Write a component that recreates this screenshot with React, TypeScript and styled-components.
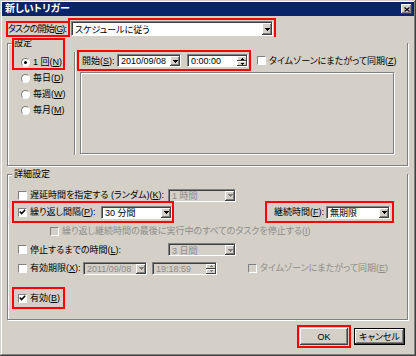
import React from 'react'
import styled, { createGlobalStyle } from 'styled-components'

const FACE = '#d4d0c8'
const SHADOW = '#808080'
const DARK = '#404040'
const MARK = '#ff0000'
const GRAYTEXT = '#8e8c88'

const GlobalStyle = createGlobalStyle`
  html, body {
    margin: 0;
    padding: 0;
    background: ${FACE};
  }
  body {
    font-family: "Liberation Sans", "Noto Sans CJK JP", sans-serif;
    font-size: 9px;
    font-feature-settings: "palt";
    color: #000;
  }
  * {
    box-sizing: border-box;
  }
`

const Window = styled.div`
  width: 416px;
  height: 356px;
  padding: 2px;
  background: ${FACE};
  box-shadow: inset -1px -1px ${DARK}, inset 1px 1px ${FACE}, inset -2px -2px ${SHADOW}, inset 2px 2px #fff;
  display: flex;
  flex-direction: column;
`

const TitleBar = styled.div`
  height: 14px;
  background: #0a246a;
  display: flex;
  align-items: center;
  justify-content: space-between;
  padding: 0 2px 0 3px;
`

const TitleText = styled.span`
  color: #fff;
  font-weight: bold;
  font-size: 10px;
  line-height: 12px;
`

const CloseButton = styled.span`
  width: 11px;
  height: 10px;
  background: ${FACE};
  box-shadow: inset -1px -1px ${DARK}, inset 1px 1px #fff, inset -2px -2px ${SHADOW};
  display: flex;
  align-items: center;
  justify-content: center;
`

const Body = styled.div`
  padding-left: 4px;
  display: flex;
  flex-direction: column;
`

const Key = styled.span`
  text-decoration: underline;
`

const TopRow = styled.div`
  display: flex;
  align-items: center;
  height: 15px;
  margin-top: 5px;
  padding-left: 2px;
`

const TopLabel = styled.span`
  width: 60px;
  height: 12px;
  line-height: 12px;
  letter-spacing: -0.8px;
  white-space: nowrap;
  outline: 2px solid ${MARK};
  margin-right: 3px;
`

const Field = styled.div<{ $w: number; $h?: number; $disabled?: boolean; $mark?: boolean }>`
  flex: none;
  display: flex;
  align-items: stretch;
  width: ${p => p.$w}px;
  height: ${p => p.$h ?? 13}px;
  background: ${p => (p.$disabled ? FACE : '#fff')};
  color: ${p => (p.$disabled ? GRAYTEXT : '#000')};
  border: 1px solid;
  border-color: ${SHADOW} #fff #fff ${SHADOW};
  box-shadow: inset 1px 1px ${DARK};
  padding: 1px 0 0 3px;
  ${p => (p.$mark ? `outline: 2px solid ${MARK}; outline-offset: 1px;` : '')}
`

const FieldText = styled.span`
  flex: 1;
  overflow: hidden;
  white-space: nowrap;
  display: flex;
  align-items: center;
`

const DropButton = styled.span`
  flex: none;
  width: 10px;
  background: ${FACE};
  box-shadow: inset -1px -1px ${DARK}, inset 1px 1px #fff, inset -2px -2px ${SHADOW};
  display: flex;
  align-items: center;
  justify-content: center;
`

const SpinBox = styled.span`
  flex: none;
  width: 10px;
  display: flex;
  flex-direction: column;
`

const SpinHalf = styled.span`
  flex: 1;
  background: ${FACE};
  box-shadow: inset -1px -1px ${DARK}, inset 1px 1px #fff;
  display: flex;
  align-items: center;
  justify-content: center;
`

const Group = styled.div<{ $mt: number; $h: number }>`
  position: relative;
  flex: none;
  margin: ${p => p.$mt}px 0 0 1px;
  width: 401px;
  height: ${p => p.$h}px;
  border: 1px solid ${SHADOW};
  box-shadow: inset 1px 1px #fff, 1px 1px #fff;
  display: flex;
  flex-direction: column;
`

const GroupTitle = styled.span`
  display: table;
  margin: -7px 0 0 4px;
  padding: 0 2px;
  height: 12px;
  line-height: 12px;
  background: ${FACE};
`

const SettingsMark = styled.span`
  position: absolute;
  left: 4px;
  top: -6px;
  width: 53px;
  height: 32px;
  border: 2px solid ${MARK};
  pointer-events: none;
`

const SettingsBody = styled.div`
  display: flex;
  flex: 1;
`

const RadioColumn = styled.div`
  width: 66px;
  padding: 5px 0 0 13px;
  display: flex;
  flex-direction: column;
`

const RadioRow = styled.label`
  height: 16px;
  display: flex;
  align-items: center;
  gap: 3px;
`

const RadioDot = styled.span<{ $checked?: boolean }>`
  flex: none;
  width: 9px;
  height: 9px;
  border-radius: 50%;
  background: #fff;
  border: 1px solid;
  border-color: ${SHADOW} #fff #fff ${SHADOW};
  display: flex;
  align-items: center;
  justify-content: center;
  &::after {
    content: '';
    width: 3px;
    height: 3px;
    border-radius: 50%;
    background: ${p => (p.$checked ? '#000' : 'transparent')};
  }
`

const Divider = styled.span`
  flex: none;
  width: 2px;
  height: 103px;
  margin-top: 3px;
  border-left: 1px solid ${SHADOW};
  border-right: 1px solid #fff;
`

const RightArea = styled.div`
  padding-left: 3px;
  display: flex;
  flex-direction: column;
`

const StartRow = styled.div`
  display: flex;
  align-items: center;
  height: 17px;
  margin-top: 3px;
`

const StartMark = styled.div`
  display: flex;
  align-items: center;
  width: 170px;
  height: 17px;
  padding-left: 3px;
  outline: 2px solid ${MARK};
`

const Frame = styled.div`
  width: 314px;
  height: 82px;
  margin: 3px 0 0 1px;
  border: 1px solid ${SHADOW};
  box-shadow: inset 1px 1px #fff, 1px 1px #fff;
`

const Row = styled.div<{ $mt: number; $h: number; $pl?: number }>`
  display: flex;
  align-items: center;
  margin-top: ${p => p.$mt}px;
  height: ${p => p.$h}px;
  padding-left: ${p => p.$pl ?? 10}px;
`

const RowMark = styled.div<{ $w: number; $ml: number; $pl: number }>`
  display: flex;
  align-items: center;
  width: ${p => p.$w}px;
  height: 18px;
  margin-left: ${p => p.$ml}px;
  padding-left: ${p => p.$pl}px;
  outline: 2px solid ${MARK};
`

const Label = styled.span<{ $w?: number; $disabled?: boolean }>`
  flex: none;
  ${p => (p.$w ? `width: ${p.$w}px;` : '')}
  line-height: 12px;
  white-space: nowrap;
  color: ${p => (p.$disabled ? GRAYTEXT : '#000')};
`

const Check = styled.span<{ $disabled?: boolean }>`
  flex: none;
  width: 9px;
  height: 9px;
  margin-right: 3px;
  background: ${p => (p.$disabled ? FACE : '#fff')};
  border: 1px solid;
  border-color: ${SHADOW} #fff #fff ${SHADOW};
  display: flex;
  align-items: center;
  justify-content: center;
`

const ButtonRow = styled.div`
  display: flex;
  justify-content: flex-end;
  gap: 6px;
  margin-top: 8px;
  padding-right: 9px;
`

const PushButton = styled.button<{ $w: number; $default?: boolean; $mark?: boolean }>`
  width: ${p => p.$w}px;
  height: 17px;
  padding: 0;
  font: inherit;
  line-height: 12px;
  color: #000;
  background: ${FACE};
  border: ${p => (p.$default ? '1px solid #000' : 'none')};
  box-shadow: inset -1px -1px ${DARK}, inset 1px 1px #fff, inset -2px -2px ${SHADOW};
  ${p => (p.$mark ? `outline: 2px solid ${MARK}; outline-offset: 1px;` : '')}
`

const Arrow = ({ disabled }: { disabled?: boolean }) => (
  <svg width="5" height="3" viewBox="0 0 5 3">
    <path d="M0 0H5V1H4V2H3V3H2V2H1V1H0Z" fill={disabled ? SHADOW : '#000'} />
  </svg>
)

const SmallArrow = ({ up, disabled }: { up?: boolean; disabled?: boolean }) => (
  <svg width="3" height="2" viewBox="0 0 3 2">
    <path d={up ? 'M1 0H2V1H3V2H0V1H1Z' : 'M0 0H3V1H2V2H1V1H0Z'} fill={disabled ? SHADOW : '#000'} />
  </svg>
)

const CheckMark = () => (
  <svg width="7" height="6" viewBox="0 0 7 6">
    <path d="M0.8 2.6L2.6 4.6L6.2 0.8" fill="none" stroke="#000" strokeWidth="1.5" />
  </svg>
)

type ComboProps = { w: number; h?: number; value: string; disabled?: boolean; mark?: boolean }

const Combo = ({ w, h, value, disabled, mark }: ComboProps) => (
  <Field $w={w} $h={h} $disabled={disabled} $mark={mark}>
    <FieldText>{value}</FieldText>
    <DropButton>
      <Arrow disabled={disabled} />
    </DropButton>
  </Field>
)

const TimeField = ({ w, value, disabled }: { w: number; value: string; disabled?: boolean }) => (
  <Field $w={w} $disabled={disabled}>
    <FieldText>{value}</FieldText>
    <SpinBox>
      <SpinHalf>
        <SmallArrow up disabled={disabled} />
      </SpinHalf>
      <SpinHalf>
        <SmallArrow disabled={disabled} />
      </SpinHalf>
    </SpinBox>
  </Field>
)

const CheckBox = ({ checked, disabled }: { checked?: boolean; disabled?: boolean }) => (
  <Check $disabled={disabled}>{checked && <CheckMark />}</Check>
)

const recurrences = [
  { text: '1 回', key: 'N', checked: true },
  { text: '毎日', key: 'D' },
  { text: '毎週', key: 'W' },
  { text: '毎月', key: 'M' }
]

const App = () => (
  <>
    <GlobalStyle />
    <Window>
      <TitleBar>
        <TitleText>新しいトリガー</TitleText>
        <CloseButton>
          <svg width="6" height="5" viewBox="0 0 6 5">
            <path d="M0.5 0.5L5.5 4.5M5.5 0.5L0.5 4.5" stroke="#000" strokeWidth="1.2" />
          </svg>
        </CloseButton>
      </TitleBar>
      <Body>
        <TopRow>
          <TopLabel>
            タスクの開始(<Key>G</Key>):
          </TopLabel>
          <Combo w={202} h={15} value="スケジュールに従う" mark />
        </TopRow>

        <Group $mt={7} $h={123}>
          <GroupTitle>設定</GroupTitle>
          <SettingsMark />
          <SettingsBody>
            <RadioColumn>
              {recurrences.map(item => (
                <RadioRow key={item.key}>
                  <RadioDot $checked={item.checked} />
                  <Label>
                    {item.text}(<Key>{item.key}</Key>)
                  </Label>
                </RadioRow>
              ))}
            </RadioColumn>
            <Divider />
            <RightArea>
              <StartRow>
                <StartMark>
                  <Label $w={35}>
                    開始(<Key>S</Key>):
                  </Label>
                  <Combo w={64} value="2010/09/08" />
                  <Label $w={6} />
                  <TimeField w={61} value="0:00:00" />
                </StartMark>
                <Label $w={8} />
                <CheckBox />
                <Label>
                  タイムゾーンにまたがって同期(<Key>Z</Key>)
                </Label>
              </StartRow>
              <Frame />
            </RightArea>
          </SettingsBody>
        </Group>

        <Group $mt={8} $h={146}>
          <GroupTitle>詳細設定</GroupTitle>

          <Row $mt={8} $h={14}>
            <CheckBox />
            <Label $w={138}>
              遅延時間を指定する (ランダム)(<Key>K</Key>):
            </Label>
            <Combo w={68} value="1 時間" disabled />
          </Row>

          <Row $mt={1} $h={18} $pl={0}>
            <RowMark $w={158} $ml={6} $pl={4}>
              <CheckBox checked />
              <Label $w={71}>
                繰り返し間隔(<Key>P</Key>):
              </Label>
              <Combo w={71} value="30 分間" />
            </RowMark>
            <RowMark $w={125} $ml={95} $pl={7}>
              <Label $w={52}>
                継続時間(<Key>F</Key>):
              </Label>
              <Combo w={64} value="無期限" />
            </RowMark>
          </Row>

          <Row $mt={4} $h={12} $pl={42}>
            <CheckBox disabled />
            <Label $disabled>
              繰り返し継続時間の最後に実行中のすべてのタスクを停止する(<Key>I</Key>)
            </Label>
          </Row>

          <Row $mt={6} $h={13}>
            <CheckBox />
            <Label $w={138}>
              停止するまでの時間(<Key>L</Key>):
            </Label>
            <Combo w={68} value="3 日間" disabled />
          </Row>

          <Row $mt={5} $h={14}>
            <CheckBox />
            <Label $w={53}>
              有効期限(<Key>X</Key>):
            </Label>
            <Combo w={64} value="2011/09/08" disabled />
            <Label $w={5} />
            <TimeField w={65} value="19:18:59" disabled />
            <Label $w={31} />
            <CheckBox disabled />
            <Label $disabled>
              タイムゾーンにまたがって同期(<Key>E</Key>)
            </Label>
          </Row>

          <Row $mt={14} $h={18} $pl={0}>
            <RowMark $w={49} $ml={6} $pl={4}>
              <CheckBox checked />
              <Label>
                有効(<Key>B</Key>)
              </Label>
            </RowMark>
          </Row>
        </Group>

        <ButtonRow>
          <PushButton $w={48} $mark>
            OK
          </PushButton>
          <PushButton $w={51} $default>
            キャンセル
          </PushButton>
        </ButtonRow>
      </Body>
    </Window>
  </>
)

export default App
